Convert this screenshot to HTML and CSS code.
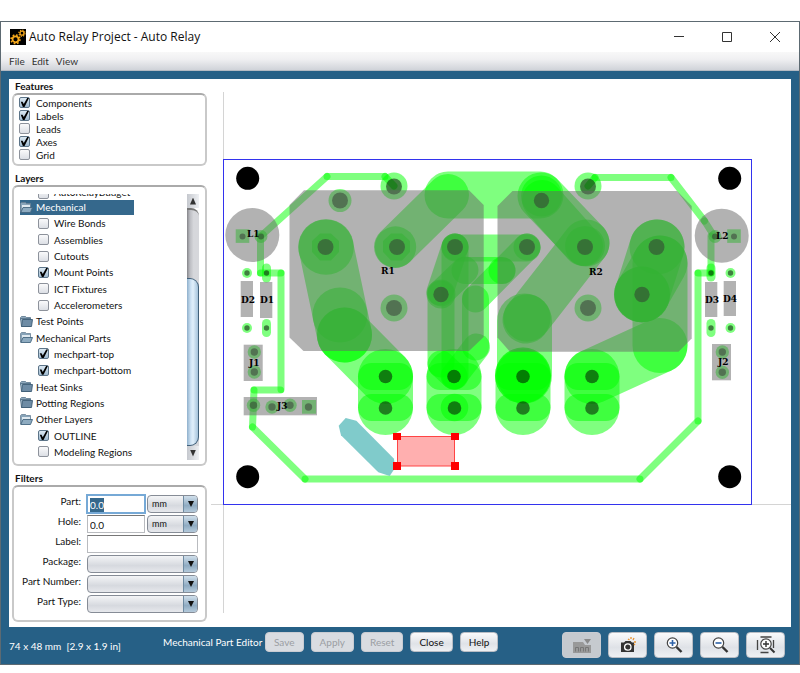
FILE: index.html
```html
<!DOCTYPE html>
<html lang="en">
<head>
<meta charset="utf-8">
<title>Auto Relay Project - Auto Relay</title>
<link rel="stylesheet" href="styles.css">
</head>
<body>
<div class="window">
  <header class="titlebar">
    <svg class="app-icon" viewBox="0 0 16 16" aria-hidden="true">
      <rect width="16" height="16" fill="#000"/>
      <g fill="none" stroke="#f5a81c">
        <circle cx="5.500" cy="10.300" r="3" stroke-width="1.800"/>
        <circle cx="5.500" cy="10.300" r="4.400" stroke-width="1.600" stroke-dasharray="1.700 1.756"/>
        <circle cx="12" cy="4.200" r="2" stroke-width="1.300"/>
        <circle cx="12" cy="4.200" r="3.100" stroke-width="1.200" stroke-dasharray="1.200 1.235"/>
      </g>
    </svg>
    <h1>Auto Relay Project - Auto Relay</h1>
    <div class="caption-buttons">
      <button type="button" aria-label="Minimize"><svg viewBox="0 0 12 12"><path d="M1 5.500h10"/></svg></button>
      <button type="button" aria-label="Maximize"><svg viewBox="0 0 12 12"><path d="M1.500 1.500h9v9h-9z"/></svg></button>
      <button type="button" aria-label="Close window"><svg viewBox="0 0 12 12"><path d="M1 1l10 10M11 1L1 11"/></svg></button>
    </div>
  </header>
  <nav class="menubar">
    <button type="button">File</button>
    <button type="button">Edit</button>
    <button type="button">View</button>
  </nav>
  <main class="workspace">
    <aside class="sidebar">
      <h2>Features</h2>
      <section class="box features">
        <label><input type="checkbox" checked>Components</label>
        <label><input type="checkbox" checked>Labels</label>
        <label><input type="checkbox">Leads</label>
        <label><input type="checkbox" checked>Axes</label>
        <label><input type="checkbox">Grid</label>
      </section>
      <h2>Layers</h2>
      <section class="box layers">
        <div class="tree">
          <label class="leaf clipped"><input type="checkbox">AutoRelayBudget</label>
          <div class="folder selected"><svg viewBox="0 0 13 11"><use href="#open"/></svg><span>Mechanical</span></div>
          <label class="leaf"><input type="checkbox">Wire Bonds</label>
          <label class="leaf"><input type="checkbox">Assemblies</label>
          <label class="leaf"><input type="checkbox">Cutouts</label>
          <label class="leaf"><input type="checkbox" checked>Mount Points</label>
          <label class="leaf"><input type="checkbox">ICT Fixtures</label>
          <label class="leaf"><input type="checkbox">Accelerometers</label>
          <div class="folder"><svg viewBox="0 0 13 11"><use href="#closed"/></svg><span>Test Points</span></div>
          <div class="folder"><svg viewBox="0 0 13 11"><use href="#open"/></svg><span>Mechanical Parts</span></div>
          <label class="leaf"><input type="checkbox" checked>mechpart-top</label>
          <label class="leaf"><input type="checkbox" checked>mechpart-bottom</label>
          <div class="folder"><svg viewBox="0 0 13 11"><use href="#closed"/></svg><span>Heat Sinks</span></div>
          <div class="folder"><svg viewBox="0 0 13 11"><use href="#closed"/></svg><span>Potting Regions</span></div>
          <div class="folder"><svg viewBox="0 0 13 11"><use href="#open"/></svg><span>Other Layers</span></div>
          <label class="leaf"><input type="checkbox" checked>OUTLINE</label>
          <label class="leaf"><input type="checkbox">Modeling Regions</label>
        </div>
        <div class="scrollbar">
          <button type="button" class="up" aria-label="Scroll up"></button>
          <div class="track"><div class="thumb"></div></div>
          <button type="button" class="down" aria-label="Scroll down"></button>
        </div>
      </section>
      <h2>Filters</h2>
      <form class="box filters">
        <label for="part">Part:</label>
        <input id="part" type="text" value="0.0">
        <span class="select"><select aria-label="Part unit"><option>mm</option></select></span>
        <label for="hole">Hole:</label>
        <input id="hole" type="text" value="0.0">
        <span class="select"><select aria-label="Hole unit"><option>mm</option></select></span>
        <label for="label">Label:</label>
        <input id="label" class="wide" type="text">
        <label for="package">Package:</label>
        <span class="select wide"><select id="package"><option></option></select></span>
        <label for="number">Part Number:</label>
        <span class="select wide"><select id="number"><option></option></select></span>
        <label for="type">Part Type:</label>
        <span class="select wide"><select id="type"><option></option></select></span>
      </form>
    </aside>
    <svg class="board" viewBox="210 79 581 548" role="img" aria-label="Board layout">
      <defs>
        <g id="closed">
          <path d="M.5 1.500l1-1h4l1 1h4v2h-10z" fill="#8fa9bd" stroke="#4d6b83" stroke-width=".7"/>
          <path d="M.5 2.500h10v8h-9z" fill="#a9c0d0" stroke="#4d6b83" stroke-width=".8"/>
          <path d="M2.500 3.500h10l-1 7H1.500z" fill="#6e8ca5" stroke="#3d5c75" stroke-width=".9"/>
        </g>
        <g id="open">
          <path d="M.5 10V1.500l1-1h4l1 1h4V7z" fill="#87a3b8" stroke="#6a8296" stroke-width=".8"/>
          <path d="M2 3h8v4H2z" fill="#dfe9f0"/>
          <path d="M3 5.500h9.500l-2 5H.8z" fill="#8eabc0" stroke="#456780" stroke-width=".9"/>
        </g>
        <g id="station">
          <path class="w55" d="M0 376.500V407.500"/>
          <path class="w27" d="M-14 376.500H14"/>
          <path class="w27" d="M-14 407.500H14"/>
        </g>
      </defs>
      <path class="axis" d="M223.500 92V613M211 504.500H791"/>
      <g class="mount">
        <circle cx="247.700" cy="178.300" r="11.500"/><circle cx="729.700" cy="178.300" r="11.500"/>
        <circle cx="247.700" cy="476.700" r="11.500"/><circle cx="729.700" cy="476.700" r="11.500"/>
      </g>
      <g class="copper">
        <g class="w7">
          <path d="M261 236L327 176.500"/><path d="M327 176.500H385"/><path d="M385 176.500L394 186"/>
          <path d="M260.500 236V273"/><path d="M260.500 273H281"/><path d="M281 273V389.500"/>
          <path d="M280.500 390H254"/><path d="M254 390L252.500 427"/><path d="M252.500 427L305 479"/>
          <path d="M305 479H640"/><path d="M640 479L698 421"/><path d="M698 421V273"/>
          <path d="M698 273H711"/><path d="M711 273V236"/><path d="M714 236L704.500 221"/>
          <path d="M704.500 221L671 177.500"/><path d="M671 177.500H595"/><path d="M595 177.500L588 186"/>
        </g>
        <path class="w9" d="M266.500 268V278"/><path class="w9" d="M266.500 323.500V332.500"/>
        <path class="w9" d="M711 268V277"/><path class="w9" d="M711 323.500V332.500"/>
        <g class="pad">
          <circle cx="247" cy="273" r="5"/><circle cx="247" cy="328" r="5"/>
          <circle cx="730.500" cy="273" r="5"/><circle cx="730.500" cy="328" r="5"/>
          <circle cx="261" cy="236.500" r="6.500"/><circle cx="715" cy="236.500" r="6.500"/>
          <rect x="235.700" y="229.300" width="13.600" height="13.600"/><rect x="727.200" y="229.300" width="13.600" height="13.600"/>
          <circle cx="254.300" cy="352" r="6.700"/><circle cx="254.300" cy="372" r="6.700"/>
          <circle cx="722.300" cy="352" r="6.700"/><circle cx="722.300" cy="372.300" r="6.700"/>
          <circle cx="253.500" cy="405.300" r="6.700"/><circle cx="272" cy="407" r="6.700"/><circle cx="290" cy="405.300" r="6.700"/>
          <rect x="302" y="400" width="14" height="13.700"/>
          <circle cx="340" cy="200.500" r="11.500"/>
          <circle cx="394" cy="186" r="13.500"/><circle cx="394" cy="308" r="13.500"/>
          <circle cx="588" cy="186" r="13.500"/><circle cx="588" cy="308" r="13.500"/>
        </g>

        <!-- left supply path -->
        <path class="w55" d="M326 247L344.500 335"/>
        <path class="w55" d="M344.500 335L385.500 376.500"/>
        <g class="pad">
          <circle cx="326" cy="247" r="27.800"/>
          <path d="M320 233.500H331L339 241V252L331 260.500H320L312 252V241Z"/>
          <circle cx="340" cy="315" r="27.500"/><circle cx="344.500" cy="335" r="27.500"/>
        </g>

        <!-- upper bridge between the relays -->
        <path class="w42" d="M395 247L448 195"/>
        <path class="w47" d="M448 195H540"/>
        <path class="w47" d="M541 196L586 243"/>
        <path class="w40" d="M542 200L583 246"/>
        <g class="pad">
          <circle cx="395.500" cy="247" r="20.700"/>
          <path d="M391 233.500H402L410 241V252L402 260.500H391L383 252V241Z"/>
          <circle cx="541.500" cy="196" r="20.500"/>
          <circle cx="585" cy="246" r="20"/>
        </g>
        <path class="w47" d="M586 243L526 320"/>
        <path class="w55" d="M524.500 321V376"/>
        <g class="pad">
          <circle cx="527" cy="318" r="23.700"/>
          <circle cx="523" cy="375.500" r="28"/><circle cx="523" cy="375.500" r="28"/>
        </g>

        <!-- coil connections -->
        <g class="w27">
          <path d="M455 248H527"/><path d="M455 247L440 292"/><path d="M455 247V376"/>
          <path d="M441 293L465 270"/><path d="M465 270.500H502"/><path d="M527 247L475.500 299"/>
          <path d="M475.500 299V347"/><path d="M441 294V364"/><path d="M441 364L454 376"/>
          <path d="M476.500 347L454 376"/>
        </g>
        <g class="pad">
          <circle cx="455" cy="247" r="13.500"/><circle cx="527" cy="247" r="13.500"/>
          <circle cx="441" cy="294" r="14.500"/>
          <circle cx="502" cy="270.500" r="13.500"/><circle cx="454.500" cy="407.500" r="13.800"/>
        </g>

        <!-- right supply path -->
        <path class="w55" d="M657 247L642 294.500"/>
        <path class="w55" d="M660 263L642 294.500"/>
        <path class="w55" d="M660 263V345.500"/>
        <path class="w55" d="M660 345.500L592 376.500"/>
        <g class="pad">
          <circle cx="657" cy="247" r="27.500"/><circle cx="642" cy="294.500" r="28"/><circle cx="642" cy="294.500" r="28"/>
        </g>

        <use href="#station" x="385.500"/><use href="#station" x="454"/>
        <use href="#station" x="523"/><use href="#station" x="592"/>
      </g>
      <g class="hole">
        <circle cx="247" cy="273" r="2.700"/><circle cx="247" cy="328" r="2.700"/><circle cx="266.500" cy="273" r="2.700"/><circle cx="266.500" cy="328" r="2.700"/>
        <circle cx="711" cy="273" r="2.700"/><circle cx="711" cy="328" r="2.700"/><circle cx="730.500" cy="273" r="2.700"/><circle cx="730.500" cy="328" r="2.700"/>
        <circle cx="242.500" cy="236.500" r="3"/><circle cx="261" cy="236.500" r="3"/><circle cx="715" cy="236.500" r="3"/><circle cx="734" cy="236.500" r="3"/>
        <circle cx="254.300" cy="352" r="3.700"/><circle cx="254.300" cy="372" r="3.700"/><circle cx="722.300" cy="352" r="3.700"/><circle cx="722.300" cy="372.300" r="3.700"/>
        <circle cx="253.500" cy="405.300" r="3.700"/><circle cx="272" cy="407" r="3.700"/><circle cx="290" cy="405.300" r="3.700"/><circle cx="308.500" cy="407" r="3.700"/>
        <circle cx="340" cy="200.500" r="8"/><circle cx="394" cy="186.500" r="8"/><circle cx="394" cy="308" r="8"/><circle cx="588" cy="186.500" r="8"/><circle cx="588" cy="308" r="8"/>
        <circle cx="325.500" cy="247" r="8"/><circle cx="397" cy="247" r="8"/><circle cx="455" cy="247" r="8"/><circle cx="527" cy="247" r="8"/><circle cx="441" cy="294.500" r="7.700"/>
        <circle cx="541.500" cy="200.500" r="7.700"/><circle cx="585" cy="247" r="8"/><circle cx="656.500" cy="247" r="8"/><circle cx="642" cy="294.500" r="7.700"/>
        <circle cx="385.500" cy="376.500" r="6.800"/><circle cx="385.500" cy="408" r="6.800"/><circle cx="454" cy="376.500" r="6.800"/><circle cx="454.500" cy="408" r="6.800"/>
        <circle cx="523" cy="376.500" r="6.800"/><circle cx="523" cy="408" r="6.800"/><circle cx="592" cy="376.500" r="6.800"/><circle cx="592" cy="408" r="6.800"/>
      </g>
      <g class="part">
        <path d="M289.500 205L304 190.300H469L483.700 205V337L469 351H303.500L289.500 337.500Z"/>
        <path d="M497.500 206L512.500 191H677L691.700 206V338.500L678.500 351.700H510L497.500 337.500Z"/>
        <circle cx="252.300" cy="235" r="27"/><circle cx="721.700" cy="235.700" r="27"/>
        <rect x="240.700" y="281" width="12.300" height="36"/><rect x="260" y="282" width="12.300" height="36"/>
        <rect x="705" y="282" width="12.300" height="35"/><rect x="723.700" y="281" width="12.300" height="35"/>
        <rect x="243.700" y="344.700" width="19" height="36.300"/><rect x="712" y="344" width="19" height="36.300"/>
        <rect x="243.700" y="397" width="73.300" height="18.300"/>
      </g>
      <path d="M338.700 425.700L345.700 418L356.300 420.700L394 458.700L395 468L389.700 476L378.300 472.300L341 435.300Z" fill="#80cbcb"/>
      <rect x="397.500" y="436.500" width="57" height="29.500" fill="#ffafaf" stroke="#f44"/>
      <path d="M393 433h8v7h-8zM451 433h8v7h-8zM393 462h8v8h-8zM451 462h8v8h-8z" fill="#f00"/>
      <rect class="outline" x="223.500" y="159.500" width="528" height="345"/>
      <g class="refdes">
        <text x="247" y="237">L1</text><text x="716" y="239">L2</text>
        <text x="241" y="303">D2</text><text x="260" y="303">D1</text>
        <text x="705" y="303">D3</text><text x="723" y="302">D4</text>
        <text x="381" y="274">R1</text><text x="589" y="275">R2</text>
        <text x="249" y="366">J1</text><text x="277" y="409">J3</text><text x="718" y="365">J2</text>
      </g>
    </svg>
  </main>
  <footer class="statusbar">
    <p class="size">74 x 48 mm&nbsp; [2.9 x 1.9 in]</p>
    <div class="editor">
      <span>Mechanical Part Editor</span>
      <button type="button" disabled>Save</button>
      <button type="button" disabled>Apply</button>
      <button type="button" disabled>Reset</button>
      <button type="button">Close</button>
      <button type="button">Help</button>
    </div>
    <div class="tools">
      <button type="button" disabled aria-label="Measure">
        <svg viewBox="0 0 20 16"><path d="M1 5h10l2 3h6v8H1z" fill="#999"/><path d="M12 2h7l-3.500 5z" fill="#8a8a8a"/><path d="M3.500 14.500v-4h3v4M8.500 14.500v-4h3v4M13.500 14.500v-4h3v4" fill="none" stroke="#777"/></svg>
      </button>
      <button type="button" aria-label="Snapshot">
        <svg viewBox="0 0 20 16"><path d="M3 5.500h3l1.500-1.500h5L14 5.500h2v9.500H3z" fill="#333"/><circle cx="9.800" cy="10" r="3.200" fill="#333" stroke="#fff" stroke-width="1.300"/><path d="M10 2l1.500 1M13 0v2M15 3l1-2M16 5h2M17 8l-1-1" stroke="#e8922e" stroke-width="1.300"/></svg>
      </button>
      <button type="button" aria-label="Zoom in">
        <svg viewBox="0 0 20 16"><circle cx="8.500" cy="6" r="5.200" fill="#fff" stroke="#444" stroke-width="1.200"/><path d="M12.500 10l5 5" stroke="#333" stroke-width="2.400"/><path d="M5.500 6h6M8.500 3v6" stroke="#2e62a8" stroke-width="1.600"/></svg>
      </button>
      <button type="button" aria-label="Zoom out">
        <svg viewBox="0 0 20 16"><circle cx="8.500" cy="6" r="5.200" fill="#fff" stroke="#444" stroke-width="1.200"/><path d="M12.500 10l5 5" stroke="#333" stroke-width="2.400"/><path d="M5.500 6h6" stroke="#2e62a8" stroke-width="1.600"/></svg>
      </button>
      <button type="button" aria-label="Zoom to fit">
        <svg viewBox="0 0 20 18"><path d="M4.500 1h11M4.500 16.500h8M1.500 4v10M17.500 4v8" stroke="#444" stroke-width="1.300"/><circle cx="10" cy="8" r="5.200" fill="#fff" stroke="#444" stroke-width="1.200"/><path d="M14 12l4.500 4.500" stroke="#333" stroke-width="2"/><path d="M7 8h6M10 5v6" stroke="#333" stroke-width="1.400"/></svg>
      </button>
    </div>
  </footer>
</div>
<script src="script.js"></script>
</body>
</html>
```
FILE: styles.css
```css
* { box-sizing: border-box; }

body {
  margin: 0;
  height: 100vh;
  padding: 21px 0 8px;
  background: #fff;
  color: #111;
  font: 10px/14px Lato, "Open Sans", sans-serif;
}

h1, h2, p { margin: 0; font-weight: 400; }
button, input, select { font: inherit; color: inherit; margin: 0; }
button { padding: 0; }

.window {
  display: flex;
  flex-direction: column;
  height: 100%;
  min-height: 560px;
  border: 1px solid #5d6a72;
  background: #266086;
}

/* Title bar and menu */
.titlebar {
  display: flex;
  align-items: center;
  height: 30px;
  padding-left: 9px;
  background: #fff;
}
.app-icon { width: 16px; height: 16px; margin-right: 3px; }
.titlebar h1 { font: 12px/16px "Open Sans", sans-serif; }
.caption-buttons { display: flex; margin-left: auto; }
.caption-buttons button { width: 48px; height: 30px; border: 0; background: none; }
.caption-buttons svg { display: block; width: 12px; height: 12px; margin: auto; fill: none; stroke: #333; }
.menubar {
  display: flex;
  gap: 7px;
  height: 19px;
  padding-left: 8px;
  background: linear-gradient(#f8f8f8, #f0f0f2 40%, #d0d3d9);
  border-bottom: 1px solid #b4bac2;
}
.menubar button { border: 0; background: none; color: #333; }

/* Work area */
.workspace {
  display: flex;
  flex: 1;
  min-height: 0;
  margin: 8px 8px 0;
  background: #fff;
}
.sidebar {
  display: flex;
  flex-direction: column;
  width: 201px;
  flex: none;
  padding: 0 3px 5px;
}
.sidebar h2 { padding-left: 3px; font-size: 10px; font-weight: 700; line-height: 14px; }
.sidebar .box + h2 { margin-top: 5px; }
.box {
  border: 2px solid #c9c9c9;
  border-top-color: #aaa;
  border-radius: 6px;
}
.board { flex: 1; min-width: 0; width: 100%; height: 100%; }

/* Check boxes */
input[type="checkbox"] {
  appearance: none;
  flex: none;
  width: 11px;
  height: 11px;
  border: 1px solid #8d929b;
  border-radius: 2px;
  background: linear-gradient(#fafafb, #dcdfe5);
}
input[type="checkbox"]:checked {
  border-color: #5c7488;
  background: linear-gradient(#dce9f3, #9fbad0);
}
input[type="checkbox"]:checked::before {
  content: "";
  display: block;
  height: 9px;
  background: #000;
  clip-path: polygon(8% 42%, 28% 42%, 42% 68%, 80% 0, 100% 0, 50% 100%, 32% 100%);
}

.features {
  display: grid;
  padding: 1px 0 3px 5px;
}
.features label { display: flex; align-items: center; gap: 6px; height: 13px; }

.layers {
  display: flex;
  flex: 1;
  min-height: 0;
  padding: 7px 6px 4px;
}
.tree {
  display: grid;
  flex: 1;
  min-height: 0;
  grid-template-rows: 5px;
  grid-auto-rows: minmax(0, 1fr);
}
.leaf { display: flex; align-items: center; gap: 5px; padding-left: 18px; white-space: nowrap; }
.clipped { align-items: flex-end; overflow: hidden; }
.folder {
  display: flex;
  align-items: center;
  align-self: center;
  gap: 3px;
  width: 114px;
  height: 15px;
  white-space: nowrap;
}
.folder svg { width: 13px; height: 11px; flex: none; }
.selected { background: #35688c; color: #fff; }

.scrollbar { display: flex; flex-direction: column; width: 12px; }
.scrollbar button {
  height: 14px;
  border: 0;
  background: linear-gradient(90deg, #c5c8ce, #eef0f3);
}
.scrollbar button::before {
  content: "";
  display: block;
  width: 6px;
  height: 7px;
  margin: auto;
  background: #333;
  clip-path: polygon(50% 0, 100% 100%, 0 100%);
}
.scrollbar .down::before { clip-path: polygon(0 0, 100% 0, 50% 100%); }
.track {
  display: flex;
  flex: 1;
  align-items: flex-end;
  border-radius: 0 8px 0 0;
  background: linear-gradient(90deg, #85858a, #bcbdc2 25%, #d6d7db 55%);
  border-top: 2px solid #777;
}
.thumb {
  width: 100%;
  height: 71%;
  border: 1px solid #40607a;
  border-left-width: 0;
  border-radius: 0 9px 9px 0;
  background: linear-gradient(90deg, #8fb0cc, #cfe3f4 35%, #e0effb 55%, #a4c2da);
}

/* Filter form */
.filters {
  display: grid;
  grid-template-columns: 70px 58px 1fr;
  grid-auto-rows: 18px;
  row-gap: 2px;
  column-gap: 2px;
  padding: 8px 7px 7px 1px;
}
.filters label { line-height: 12px; text-align: right; padding-right: 4px; }
.filters input {
  width: 100%;
  min-width: 0;
  padding: 1px 2px 0;
  border: 1px solid #b9bbbf;
  border-top-color: #777;
  border-radius: 0;
  background: #fff;
}
.filters input:focus { outline: 1px solid #76a9d6; border-color: #76a9d6; }
.filters input::selection { background: #35688c; color: #fff; }
.filters .wide { grid-column: 2 / -1; }
.select { position: relative; display: block; }
.select select {
  display: block;
  appearance: none;
  width: 100%;
  height: 100%;
  padding: 0 4px;
  border: 1px solid #868c96;
  border-radius: 4px;
  background: linear-gradient(#f4f5f7, #d6d9df 60%, #e6e8ec);
  font-size: 9px;
}
.select::after {
  content: "";
  position: absolute;
  top: 1px;
  right: 1px;
  bottom: 1px;
  width: 13px;
  border-left: 1px solid #6f8ba2;
  border-radius: 0 3px 3px 0;
  background: linear-gradient(#d0dfeb, #8fabc2 60%, #b4cadb);
  pointer-events: none;
}
.select::before {
  content: "";
  position: absolute;
  z-index: 1;
  top: 6px;
  right: 4px;
  width: 6px;
  height: 6px;
  background: #111;
  clip-path: polygon(0 0, 100% 0, 50% 100%);
  pointer-events: none;
}

/* Board drawing */
.axis { stroke: #d4d4d4; fill: none; }
.mount { fill: #000; }
.copper { fill: none; stroke: #0f0; stroke-opacity: .5; stroke-linecap: round; }
.w7 { stroke-width: 7px; }
.w9 { stroke-width: 9px; }
.w27 { stroke-width: 27px; }
.w40 { stroke-width: 40px; }
.w42 { stroke-width: 42px; }
.w47 { stroke-width: 47px; }
.w55 { stroke-width: 55px; }
.pad { fill: #0f0; fill-opacity: .5; stroke: none; }
.hole { fill: #000; fill-opacity: .5; }
.part { fill: #656565; fill-opacity: .5; }
.outline { fill: none; stroke: #33e; }
.refdes { font: bold 9px "DejaVu Serif", serif; fill: #000; }

/* Status bar */
.statusbar {
  display: flex;
  align-items: flex-start;
  height: 37px;
  padding: 5px 14px 0 8px;
  color: #fff;
}
.size { width: 154px; padding-top: 7px; white-space: nowrap; }
.editor { display: flex; align-items: center; gap: 7px; white-space: nowrap; }
.editor span { width: 95px; }
.statusbar button {
  border: 1px solid #b9bdc4;
  border-radius: 4px;
  background: linear-gradient(#fafafb, #dfe2e7 60%, #eef0f3);
  color: #111;
}
.statusbar button:disabled { background: #d9dce1; color: #9b9ea3; border-color: #c9ccd2; }
.editor button { height: 20px; padding: 0 8px; }
.tools { display: flex; gap: 7px; margin-left: auto; }
.tools button { width: 39px; height: 26px; }
.tools button:disabled { background: #c6cacf; }
.tools svg { display: block; width: 20px; height: 18px; margin: auto; fill: none; }
```
FILE: script.js
```js
var part = document.getElementById("part");
part.focus();
part.select();
```
